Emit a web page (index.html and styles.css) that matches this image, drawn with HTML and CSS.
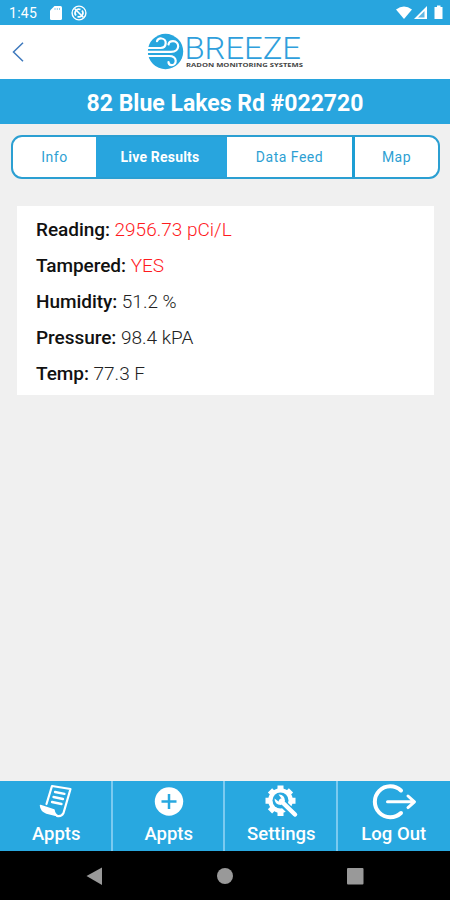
FILE: index.html
```html
<!DOCTYPE html>
<html lang="en">
<head>
  <meta charset="UTF-8">
  <meta name="viewport" content="width=device-width, initial-scale=1.0">
  <title>Breeze Radon Monitoring</title>
  <link rel="stylesheet" href="styles.css">
</head>
<body>
  <div class="statusbar">
    <span class="clock">1:45</span>
    <svg class="sdcard" width="12" height="14" viewBox="0 0 12 14"><path d="M4.5 0H10.5Q12 0 12 1.5V12.5Q12 14 10.5 14H1.500Q0 14 0 12.500V4.500Z" fill="#fff"/><path d="M5 2V4M7.300 2V4M9.500 2V4" stroke="#8dccec" stroke-width="1"/></svg>
    <svg class="sync" width="16" height="16" viewBox="0 0 16 16" fill="none" stroke="#fff"><circle cx="8" cy="8" r="6.900" stroke-width="1.400"/><path d="M5 10.500A3.800 3.800 0 0 1 9.500 4.600M11 5.500A3.800 3.800 0 0 1 6.500 11.400" stroke-width="1.700"/><path d="M3.500 3.500L12.500 12.500" stroke-width="1.600"/></svg>
    <svg class="signals" width="48" height="16" viewBox="0 0 48 16" fill="#fff"><path d="M0 4.500Q8 -1.500 16 4.500L8 14Z"/><path d="M31 1V14H18Z"/><path d="M28.500 6V12.500H22Z" fill="#62b9e4"/><path d="M40 2H41V.5H44.500V2H46.500V14H38.500V2Z"/></svg>
  </div>

  <header class="header">
    <svg class="back" width="12" height="20" viewBox="0 0 12 20"><path d="M11 .8L1.500 10L11 19.200" fill="none" stroke="#3e79bd" stroke-width="1.500"/></svg>
    <svg class="logo" width="158" height="40" viewBox="0 0 158 40">
      <circle cx="18.500" cy="19.500" r="17.700" fill="#27a6de"/>
      <g fill="none" stroke="#fff" stroke-width="2.200" stroke-linecap="round">
        <path d="M0 16H13.500C20 16 20.500 7 14.500 6.500C12 6.300 10.500 7.500 10 9.200"/>
        <path d="M0 19.800H24C33.500 19.800 33 9.200 26 9.200C23.500 9.200 21.800 10.500 21.500 12.500"/>
        <path d="M0 24H22C31 24 30 33.500 24.500 33.200C22.500 33 21.500 31.500 21.500 30"/>
      </g>
      <text class="logo-name" x="37.500" y="27" textLength="116.500" lengthAdjust="spacingAndGlyphs">BREEZE</text>
      <text class="logo-sub" x="39" y="35" textLength="117" lengthAdjust="spacingAndGlyphs">RADON MONITORING SYSTEMS</text>
    </svg>
  </header>

  <h1 class="title">82 Blue Lakes Rd #022720</h1>

  <main class="content">
    <div class="tabs">
      <div class="tab info">Info</div>
      <div class="tab live active">Live Results</div>
      <div class="tab feed">Data Feed</div>
      <div class="tab map">Map</div>
    </div>

    <div class="card">
      <p><b>Reading:</b> <span class="alert">2956.73 pCi/L</span></p>
      <p><b>Tampered:</b> <span class="alert">YES</span></p>
      <p><b>Humidity:</b> 51.2 %</p>
      <p><b>Pressure:</b> 98.4 kPA</p>
      <p><b>Temp:</b> 77.3 F</p>
    </div>
  </main>

  <nav class="menu">
    <div class="item">
      <svg width="36" height="36" viewBox="0 0 36 36" fill="none" stroke="#fff" stroke-linecap="round" stroke-linejoin="round">
        <path d="M8.500 21L14 3L32.500 6L25.500 30Q23.500 34 19 33" stroke-width="2.200"/>
        <path d="M2.500 22.500L16 27Q16.500 31.500 20.500 33L8.500 30Q3 28 2.500 22.500Z" fill="#fff" stroke-width="1.500"/>
        <path d="M17 9L26.500 10.800M15.500 14L25 16M14 19L23.500 21" stroke-width="2.300"/>
      </svg>
      <span>Appts</span>
    </div>
    <div class="item">
      <svg width="36" height="36" viewBox="0 0 36 36"><circle cx="18" cy="18.500" r="14.200" fill="#fff"/><path d="M18 11V26M10.500 18.500H25.500" stroke="#28a8e0" stroke-width="2.500"/></svg>
      <span>Appts</span>
    </div>
    <div class="item">
      <svg width="36" height="36" viewBox="0 0 36 36">
        <g stroke="#fff" stroke-width="6"><path d="M17.500 2.500V33M2.500 17.800H32.500M7 7.300L28 28.300M28 7.300L7 28.300"/></g>
        <circle cx="17.500" cy="17.500" r="12.300" fill="#fff"/>
        <circle cx="17.500" cy="17.500" r="8" fill="#28a8e0"/>
        <path d="M18 18.500L31.500 32" stroke="#28a8e0" stroke-width="8"/>
        <path d="M18 18L32 31.500" stroke="#fff" stroke-width="4.500" stroke-linecap="round"/>
        <path d="M15.500 11.500Q21.500 11 22 18L18 22Q11.500 21.500 11.500 15.500L15.500 18.500L18.500 15.500Z" fill="#fff"/>
      </svg>
      <span>Settings</span>
    </div>
    <div class="item">
      <svg width="46" height="36" viewBox="0 0 46 36" fill="none" stroke="#fff" stroke-linecap="round" stroke-linejoin="round"><path d="M30 7.500A15.500 15.500 0 1 0 30 30" stroke-width="4"/><path d="M16.500 18.800H43M37 13L43.500 18.800L37 24.600" stroke-width="3"/></svg>
      <span>Log Out</span>
    </div>
  </nav>

  <div class="navbar">
    <svg width="450" height="49" viewBox="0 0 450 49" fill="#999"><path d="M86.500 25L102 16.500V34Z"/><circle cx="225" cy="25" r="8"/><rect x="347" y="17" width="16.500" height="16.500" rx="1"/></svg>
  </div>
</body>
</html>
```
FILE: styles.css
```css
* {
  box-sizing: border-box;
}
body {
  margin: 0;
  height: 900px;
  display: flex;
  flex-direction: column;
  overflow: hidden;
  font-family: Roboto, sans-serif;
  background: #f0f0f0;
}
svg {
  display: block;
  flex: none;
  overflow: visible;
}
.statusbar {
  height: 25px;
  padding: 1px 6px 0 9px;
  display: flex;
  align-items: center;
  background: #28a5de;
  color: white;
}
.clock {
  width: 41px;
  font-size: 14px;
  letter-spacing: 0.3px;
}
.sync {
  margin-left: 9px;
}
.signals {
  margin-left: auto;
}
.header {
  height: 54px;
  padding: 0 12px;
  display: flex;
  align-items: center;
  background: white;
}
.logo {
  margin: -1px 0 0 123px;
}
.logo-name {
  font: 300 32px Roboto, sans-serif;
  fill: #2f9fdc;
}
.logo-sub {
  font: bold 6px "Open Sans", sans-serif;
  fill: #444;
}
.title {
  height: 45px;
  margin: 0;
  background: #28a5de;
  color: white;
  font-size: 23px;
  font-weight: 700;
  line-height: 50px;
  text-align: center;
}
.content {
  flex: 1;
  padding: 11px 10px 0 11px;
}
.tabs {
  height: 44px;
  display: flex;
  overflow: hidden;
  border: 2px solid #2b9fd2;
  border-radius: 11px;
  background: white;
}
.tab {
  border-right: 3px solid #1c9ed4;
  color: #2e9fd3;
  font-size: 14px;
  font-weight: 400;
  line-height: 41px;
  letter-spacing: 0.5px;
  text-align: center;
}
.tab.info {
  width: 83px;
  border: 0;
}
.tab.live {
  width: 131px;
  letter-spacing: 0.2px;
}
.tab.feed {
  width: 128px;
}
.tab.map {
  flex: 1;
  border: 0;
}
.tab.active {
  background: #28a5de;
  border-color: #28a5de;
  color: white;
  font-weight: 700;
}
.card {
  width: 417px;
  height: 189px;
  margin: 27px 0 0 6px;
  padding: 6.2px 19px;
  background: white;
  color: #222;
}
.card p {
  margin: 0;
  font-size: 19px;
  font-weight: 300;
  line-height: 35.9px;
}
.card b {
  font-weight: 500;
  letter-spacing: -0.05px;
  color: #111;
}
.card .alert {
  color: #ff1a1e;
}
.menu {
  height: 70px;
  display: grid;
  grid-template-columns: repeat(4, 1fr);
  background: #28a8e0;
}
.item {
  padding-top: 2px;
  display: flex;
  flex-direction: column;
  align-items: center;
  box-shadow: inset -2px 0 #7bcaf0;
  color: white;
  font-size: 18.5px;
  font-weight: 500;
  line-height: 30px;
}
.item:last-child {
  box-shadow: none;
}
.navbar {
  height: 49px;
  background: black;
}
```
